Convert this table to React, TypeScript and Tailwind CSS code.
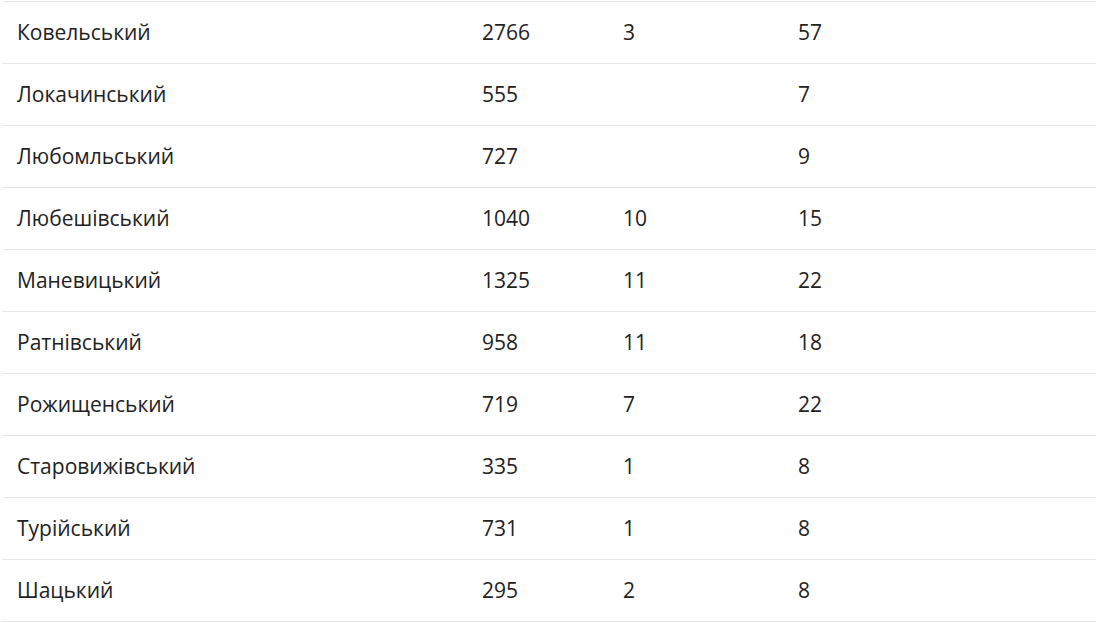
import React from "react";

const rows: [string, string, string, string][] = [
  ["Ковельський", "2766", "3", "57"],
  ["Локачинський", "555", "", "7"],
  ["Любомльський", "727", "", "9"],
  ["Любешівський", "1040", "10", "15"],
  ["Маневицький", "1325", "11", "22"],
  ["Ратнівський", "958", "11", "18"],
  ["Рожищенський", "719", "7", "22"],
  ["Старовижівський", "335", "1", "8"],
  ["Турійський", "731", "1", "8"],
  ["Шацький", "295", "2", "8"],
];

export default function App() {
  return (
    <div
      className="w-[1097px] h-[623px] bg-white pt-[1px] pl-[2px] pr-[1px] text-[#222] text-[21px]"
      style={{ fontFamily: '"Open Sans", "Noto Sans", sans-serif' }}
    >
      <div className="border-b border-[#e6e6e6]">
        {rows.map((r) => (
          <div
            key={r[0]}
            className="grid grid-cols-[465px_141px_175px_1fr] h-[62px] items-center border-t border-[#e6e6e6]"
          >
            <div className="pl-[15px]">{r[0]}</div>
            <div className="pl-[15px]">{r[1]}</div>
            <div className="pl-[15px]">{r[2]}</div>
            <div className="pl-[15px]">{r[3]}</div>
          </div>
        ))}
      </div>
    </div>
  );
}
